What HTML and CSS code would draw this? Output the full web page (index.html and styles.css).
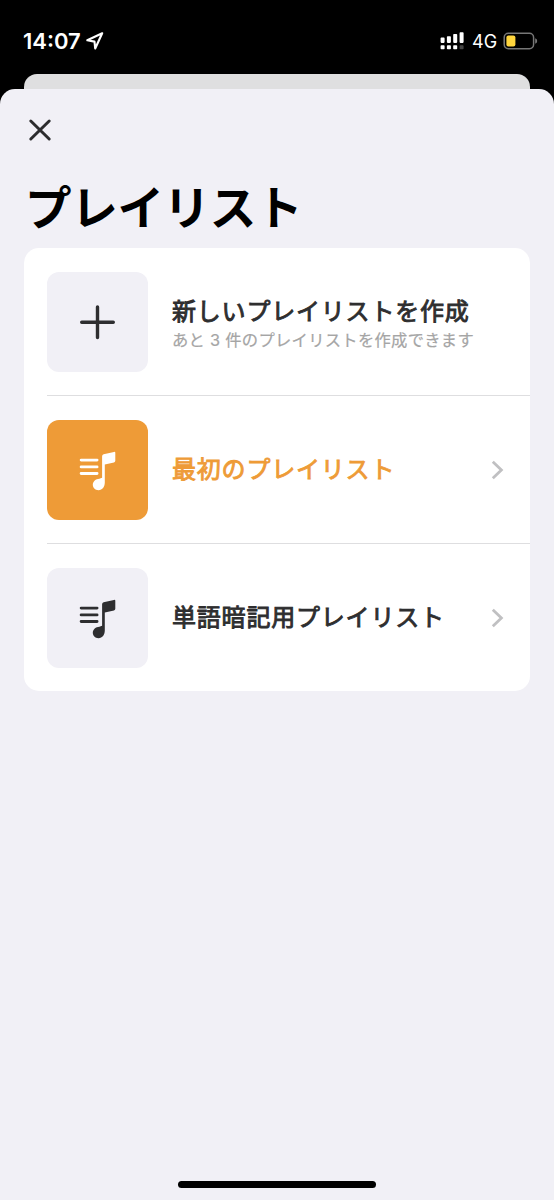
FILE: index.html
```html
<!DOCTYPE html>
<html lang="ja">
<head>
<meta charset="utf-8">
<title>プレイリスト</title>
<link rel="stylesheet" href="styles.css">
</head>
<body>
<div class="screen">
  <header class="status">
    <span class="time">14:07</span>
    <svg class="location" width="20" height="20" viewBox="0 0 20 20"><path d="M17.2 2.3 2.3 9.3l7.2 1.3.7 6.9z"/></svg>
    <svg class="signal" width="24" height="18" viewBox="0 0 24 18">
      <rect x=".6" y="5.6" width="4" height="5.3" rx=".8"/><rect x="6.9" y="4.2" width="4" height="6.7" rx=".8"/><rect x="13.2" y="2" width="4" height="8.9" rx=".8"/><rect x="19.6" y=".3" width="4" height="10.6" rx=".8"/>
      <rect x=".6" y="13.2" width="4" height="4.1" rx=".8"/><rect x="6.9" y="13.2" width="4" height="4.1" rx=".8"/><rect x="13.2" y="13.2" width="4" height="4.1" rx=".8"/>
      <rect class="dim" x="19.6" y="13.2" width="4" height="4.1" rx=".8"/>
    </svg>
    <span class="network">4G</span>
    <svg class="battery" width="36" height="18" viewBox="0 0 36 18">
      <rect class="shell" x="1.2" y="1.2" width="29.4" height="15.6" rx="4.2"/>
      <rect class="charge" x="3.4" y="3.4" width="9" height="11.2" rx="2"/>
      <path class="cap" d="M32.2 6.2q2 .8 2 2.8t-2 2.8z"/>
    </svg>
  </header>
  <div class="back-card"></div>
  <main class="sheet">
    <button class="close" aria-label="閉じる"><svg width="24" height="24" viewBox="0 0 24 24"><path d="m2.8 3 18.4 18M21.2 3 2.8 21"/></svg></button>
    <h1 class="title">プレイリスト</h1>
    <ul class="list">
      <li class="row">
        <div class="tile"><svg class="plus" width="40" height="40" viewBox="0 0 40 40"><path d="M3.7 20.3h31.6M19.5 5v30.6"/></svg></div>
        <div class="body">
          <div class="text">
            <span class="name">新しいプレイリストを作成</span>
            <span class="note">あと 3 件のプレイリストを作成できます</span>
          </div>
        </div>
      </li>
      <li class="row selected">
        <div class="tile"><svg class="music" width="40" height="42" viewBox="0 0 40 42"><path class="lines" d="M3.1 11.1h16M3.1 17.9h16M3.1 24.5h16"/><path d="M24.1 28.8V7.2q0-1.5 1.5-1.9L36 2.9q1.3-.3 1.3.9v8q0 1.3-1.3 1.6l-9.2 2.2v18c0 4.3-2.4 7.6-6.3 7.6-3.4 0-5.7-2.4-5.7-5.4 0-3.5 3-5.7 6.6-6z"/></svg></div>
        <div class="body">
          <div class="text"><span class="name">最初のプレイリスト</span></div>
          <svg class="chevron" width="14" height="22" viewBox="0 0 14 22"><path d="m2.8 2.7 8.6 8.3-8.6 8.3"/></svg>
        </div>
      </li>
      <li class="row">
        <div class="tile"><svg class="music" width="40" height="42" viewBox="0 0 40 42"><path class="lines" d="M3.1 11.1h16M3.1 17.9h16M3.1 24.5h16"/><path d="M24.1 28.8V7.2q0-1.5 1.5-1.9L36 2.9q1.3-.3 1.3.9v8q0 1.3-1.3 1.6l-9.2 2.2v18c0 4.3-2.4 7.6-6.3 7.6-3.4 0-5.7-2.4-5.7-5.4 0-3.5 3-5.7 6.6-6z"/></svg></div>
        <div class="body">
          <div class="text"><span class="name">単語暗記用プレイリスト</span></div>
          <svg class="chevron" width="14" height="22" viewBox="0 0 14 22"><path d="m2.8 2.7 8.6 8.3-8.6 8.3"/></svg>
        </div>
      </li>
    </ul>
    <div class="home-bar"></div>
  </main>
</div>
</body>
</html>
```

FILE: styles.css
```css
* { box-sizing: border-box; }
body { margin: 0; font-family: "Noto Sans CJK JP", sans-serif; }
.screen { width: 554px; height: 1200px; background: #000; display: flex; flex-direction: column; overflow: hidden; }
.status { height: 74px; padding: 8px 15px 0 23px; display: flex; align-items: center; color: #fff; font-family: Inter, sans-serif; flex: none; }
.time { font-size: 22px; font-weight: 600; width: 62px; white-space: nowrap; }
.location { fill: none; stroke: #fff; stroke-width: 2.1; stroke-linejoin: round; }
.signal { margin-left: auto; fill: #fff; }
.signal .dim { fill: #444; }
.network { font-size: 18px; font-weight: 400; margin-left: 8px; width: 31px; }
.shell { fill: none; stroke: #777; stroke-width: 1.5; }
.charge { fill: #ffd53d; }
.cap { fill: #777; }
.back-card { height: 15px; margin: 0 24px; border-radius: 13px 13px 0 0; background: #dfdfe0; flex: none; }
.sheet { flex: 1; position: relative; background: #f1f0f6; border-radius: 15px 15px 0 0; padding: 29px 24px 0; }
.close { display: block; margin: 0 0 0 4px; padding: 0; border: 0; background: none; width: 24px; height: 24px; }
.close svg { display: block; fill: none; stroke: #2c2c2e; stroke-width: 3; stroke-linecap: round; }
.title { margin: 27px 0 0 1px; height: 79px; line-height: 72px; font-size: 46.6px; letter-spacing: -.4px; font-weight: 700; color: #000; white-space: nowrap; }
.list { list-style: none; margin: 0; padding: 0; background: #fff; border-radius: 15px; overflow: hidden; }
.row { display: flex; height: 148px; padding-left: 23px; }
.row:first-child { height: 147px; }
.tile { width: 101px; height: 100px; margin-top: 24px; border-radius: 12px; background: #f1f0f6; display: flex; align-items: center; justify-content: center; flex: none; color: #2e2e30; }
.row + .row .tile { position: relative; margin-top: 25px; }
.plus { fill: none; stroke: currentColor; stroke-width: 3.4; stroke-linecap: round; }
.music { fill: currentColor; }
.lines { fill: none; stroke: currentColor; stroke-width: 2.8; stroke-linecap: round; }
.row + .row .body { border-top: 1px solid #dedee0; margin-left: -101px; padding: 0 26px 0 125px; }
.body { flex: 1; display: flex; align-items: center; padding: 3px 26px 0 24px; }
.row + .row .text { padding-bottom: 4px; }
.text { flex: 1; display: flex; flex-direction: column; }
.name { font-size: 24px; line-height: 34px; letter-spacing: .8px; font-weight: 400; -webkit-text-stroke: .9px currentColor; color: #2e2e2f; white-space: nowrap; }
.note { font-family: Inter, "Noto Sans CJK JP", sans-serif; font-size: 16.3px; line-height: 27px; letter-spacing: .3px; font-weight: 400; -webkit-text-stroke: .2px currentColor; color: #a5a5a5; white-space: nowrap; }
.selected .tile { background: #ee9b37; color: #fff; }
.selected .name { color: #ee9b37; }
.chevron { fill: none; stroke: #c0c0c2; stroke-width: 2.8; }
.home-bar { position: absolute; left: 178px; bottom: 12px; width: 198px; height: 7px; border-radius: 4px; background: #000; }
```
